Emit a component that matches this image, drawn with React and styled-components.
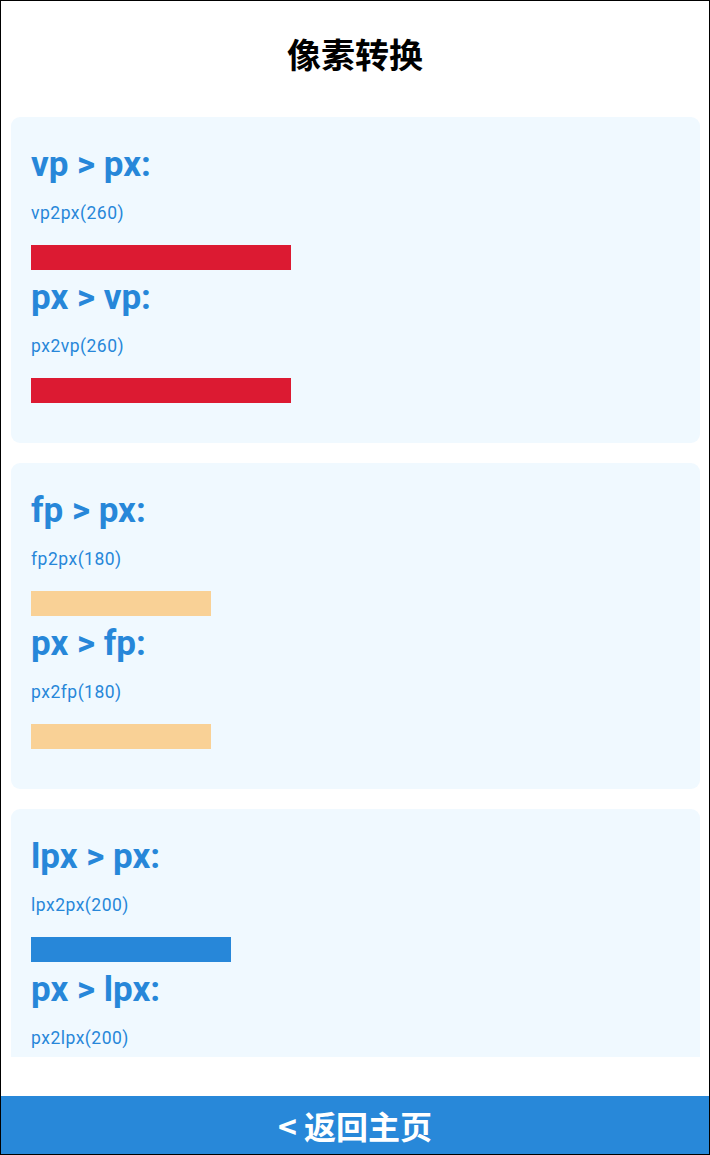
import React from "react";
import styled, { createGlobalStyle } from "styled-components";

const GlobalStyle = createGlobalStyle`
  html, body {
    margin: 0;
    padding: 0;
    background: #fff;
  }
  * {
    box-sizing: border-box;
  }
`;

const Page = styled.div`
  display: flex;
  flex-direction: column;
  height: 1155px;
  border: 1px solid #000;
  background: #fff;
  font-family: Roboto, "Noto Sans", "Noto Sans CJK SC", sans-serif;
  overflow: hidden;
`;

const Header = styled.div`
  display: flex;
  align-items: center;
  justify-content: center;
  height: 116px;
  padding-bottom: 12px;
`;

const Title = styled.h1`
  margin: 0;
  font-family: "Noto Sans CJK SC", sans-serif;
  font-size: 34px;
  font-weight: 700;
  color: #000;
`;

const List = styled.div`
  flex: 1;
  min-height: 0;
  overflow: hidden;
  padding: 0 9px 0 10px;
  display: flex;
  flex-direction: column;
  gap: 20px;
`;

const Card = styled.div`
  flex-shrink: 0;
  background: #f0f9ff;
  border-radius: 9px;
  padding: 22px 20px 38px;
`;

const Heading = styled.div`
  font-size: 35px;
  font-weight: 700;
  line-height: 52px;
  color: #2787d9;
  white-space: pre;
`;

const Formula = styled.div`
  font-size: 17.5px;
  line-height: 44px;
  letter-spacing: 0.5px;
  color: #2787d9;
`;

const Bar = styled.div`
  margin: 10px 0 2px;
  height: 25px;
  width: ${(p) => p.$w}px;
  background: ${(p) => p.$color};
`;

const Footer = styled.div`
  margin-top: 39px;
  height: 58px;
  flex-shrink: 0;
  background: #2888d9;
  color: #fff;
  display: flex;
  align-items: center;
  justify-content: center;
  font-family: "Noto Sans CJK SC", sans-serif;
  font-size: 32px;
  font-weight: 700;
`;

const groups = [
  {
    unit: "vp",
    value: 260,
    color: "#dc1a32",
  },
  {
    unit: "fp",
    value: 180,
    color: "#f9d196",
  },
  {
    unit: "lpx",
    value: 200,
    color: "#2787d9",
  },
];

const Conversion = ({ from, to, value, color }) => (
  <>
    <Heading>{`${from} > ${to}:`}</Heading>
    <Formula>{`${from}2${to}(${value})`}</Formula>
    <Bar $w={value} $color={color} />
  </>
);

export default function App() {
  return (
    <>
      <GlobalStyle />
      <Page>
        <Header>
          <Title>像素转换</Title>
        </Header>
        <List>
          {groups.map((g) => (
            <Card key={g.unit}>
              <Conversion from={g.unit} to="px" value={g.value} color={g.color} />
              <Conversion from="px" to={g.unit} value={g.value} color={g.color} />
            </Card>
          ))}
        </List>
        <Footer>&lt; 返回主页</Footer>
      </Page>
    </>
  );
}
